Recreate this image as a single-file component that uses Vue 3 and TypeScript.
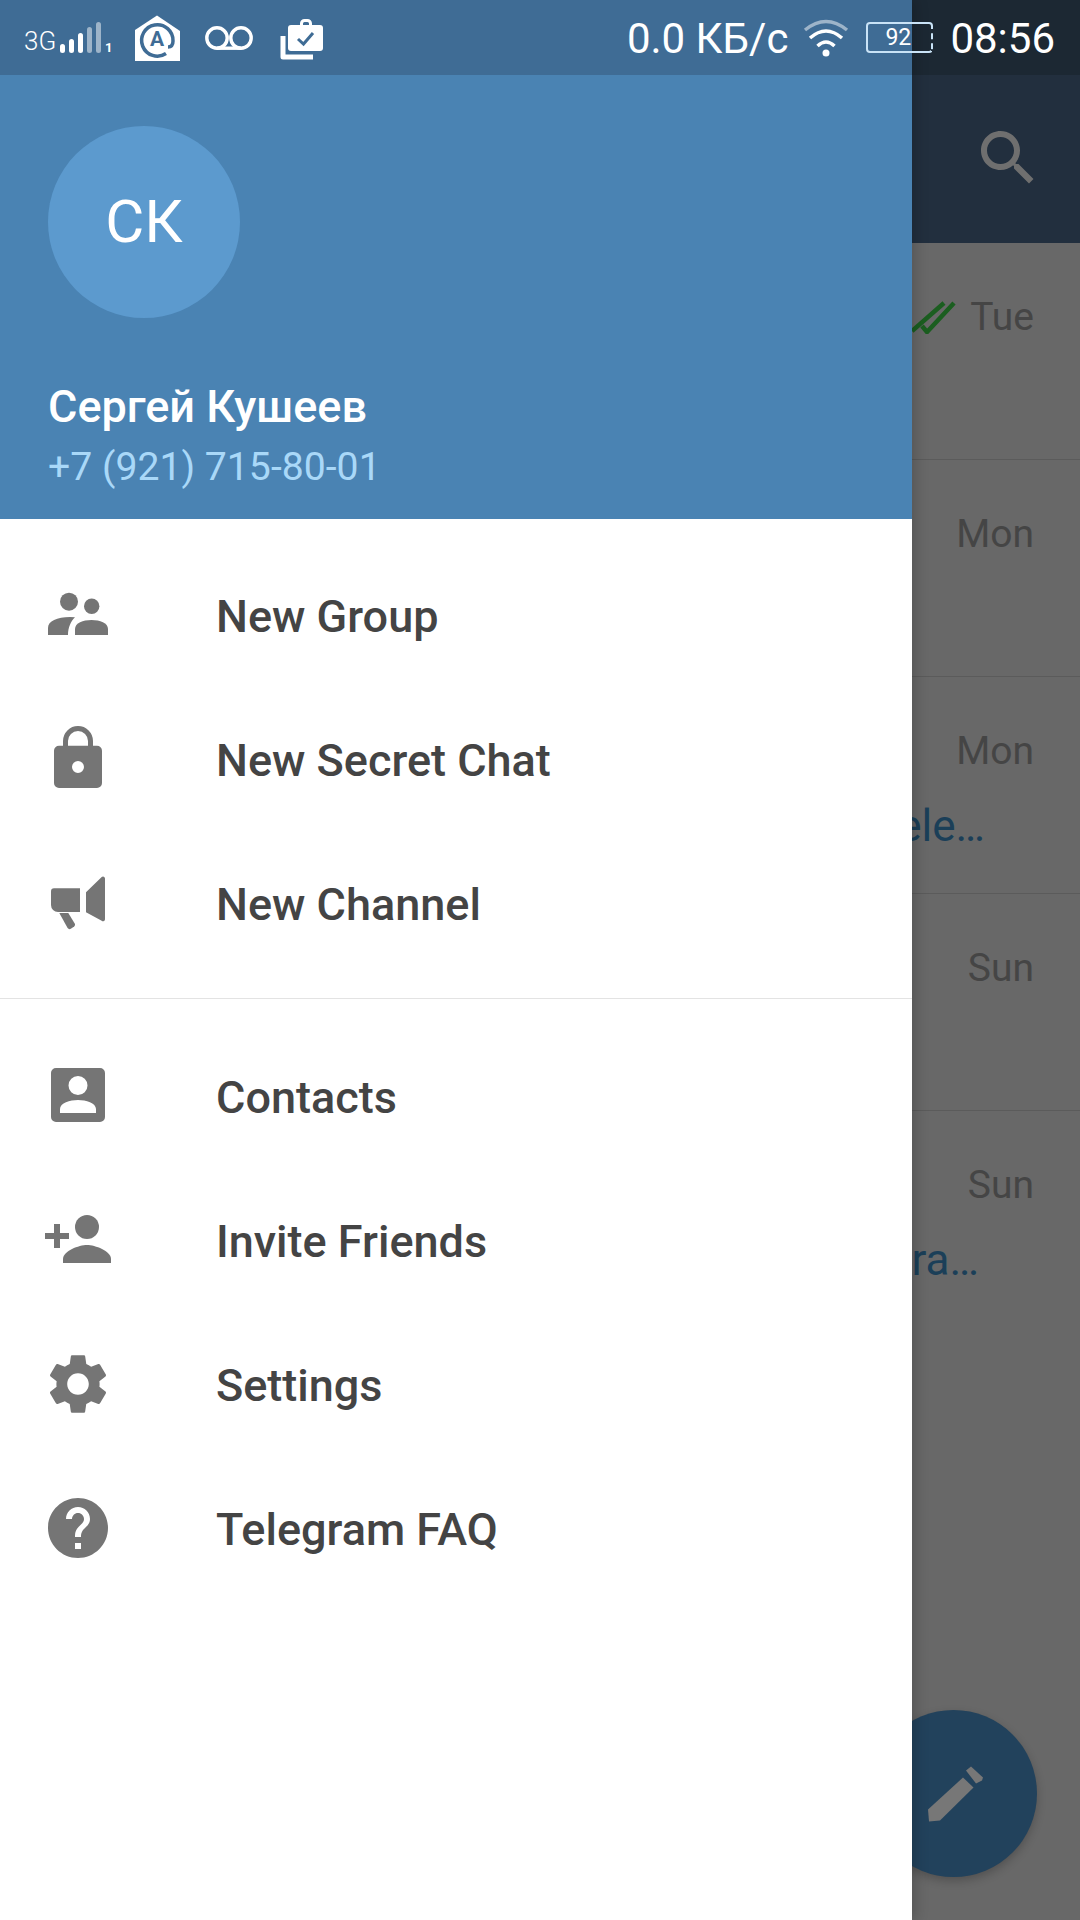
<script setup lang="ts">
interface Chat { day: string; tail?: string; tailClass?: string; read?: boolean }
const chats: Chat[] = [
  { day: 'Tue', read: true },
  { day: 'Mon' },
  { day: 'Mon', tail: 'Tele…', tailClass: 'tail-a' },
  { day: 'Sun' },
  { day: 'Sun', tail: 'Tera…', tailClass: 'tail-b' },
]
const signalBars = [
  { h: 9, dim: false }, { h: 14, dim: false }, { h: 20, dim: false }, { h: 26, dim: true }, { h: 31, dim: true },
]
const topItems = ['New Group', 'New Secret Chat', 'New Channel']
</script>

<template>
  <div class="phone">
    <!-- Chat list underneath the drawer -->
    <div class="screen">
      <div class="under-status"></div>
      <div class="toolbar">
        <svg class="search" viewBox="0 0 24 24"><path d="M15.5 14h-.79l-.28-.27C15.41 12.59 16 11.11 16 9.5 16 5.91 13.09 3 9.5 3S3 5.91 3 9.5 5.91 16 9.5 16c1.61 0 3.09-.59 4.23-1.57l.27.28v.79l5 4.99L20.49 19l-4.99-5zm-6 0C7.01 14 5 11.99 5 9.5S7.01 5 9.5 5 14 7.01 14 9.5 11.99 14 9.5 14z"/></svg>
      </div>
      <div class="chats">
        <div v-for="(c, i) in chats" :key="i" class="chat">
          <div class="chat-top">
            <svg v-if="c.read" class="ticks" viewBox="0 0 46 34"><path d="M1 31 33 3M11 26l5 6L43 3" /></svg>
            <span class="day">{{ c.day }}</span>
          </div>
          <div v-if="c.tail" class="tail" :class="c.tailClass">{{ c.tail }}</div>
        </div>
      </div>
      <div class="fab">
        <svg viewBox="918 1758.5 70 70"><path d="M927 1809 962 1777 972.500 1787 939 1820 928 1821Z"/><path d="M965 1770 970 1766 982 1777 981 1780 975 1783Z"/></svg>
      </div>
    </div>

    <!-- Drawer -->
    <aside class="drawer">
      <div class="drawer-status"></div>
      <header class="profile">
        <div class="avatar"><span>СК</span></div>
        <div class="name">Сергей Кушеев</div>
        <div class="phone-no">+7 (921) 715-80-01</div>
      </header>
      <nav class="menu">
        <section class="section first">
          <div class="row">
            <svg class="ico" viewBox="0 0 72 72"><circle cx="27" cy="22.700" r="9"/><circle cx="49.700" cy="27.300" r="7.700"/><path d="M6 56v-7c0-7 9-11 22-11l5 .3c-4 4-7 10-7 17.700z"/><path d="M33 56v-6c0-6 8-9 16.500-9S66 44 66 50v6z"/></svg>
            <span>{{ topItems[0] }}</span>
          </div>
          <div class="row">
            <svg class="ico" viewBox="0 0 72 72"><path d="M23.500 24v-6a12.500 12.500 0 0 1 25 0v6" fill="none" stroke="#757575" stroke-width="5"/><path fill-rule="evenodd" d="M17 22.700h38a5 5 0 0 1 5 5V60a5 5 0 0 1-5 5H17a5 5 0 0 1-5-5V27.700a5 5 0 0 1 5-5zM36 38a6 6 0 1 0 0 12 6 6 0 0 0 0-12z"/></svg>
            <span>{{ topItems[1] }}</span>
          </div>
          <div class="row">
            <svg class="ico" viewBox="0 0 72 72"><path d="M12 21.300h26V45H16a7 7 0 0 1-7-7V24.300a3 3 0 0 1 3-3z"/><path d="M17.300 46h9l6.700 11a2.500 2.500 0 0 1-.8 2.500l-3.400 2.300a2.500 2.500 0 0 1-3.200-.8z"/><path d="M44 25.300 59.700 10a2 2 0 0 1 3.300 1.500V52a2 2 0 0 1-3.300 1.800L44 45.300z"/></svg>
            <span>{{ topItems[2] }}</span>
          </div>
        </section>
        <section class="section second">
          <div class="row">
            <svg class="ico" viewBox="0 0 72 72"><path fill-rule="evenodd" d="M14 8h44a5 5 0 0 1 5 5v44a5 5 0 0 1-5 5H14a5 5 0 0 1-5-5V13a5 5 0 0 1 5-5zM36 16a9.500 9.500 0 1 0 0 19 9.500 9.500 0 0 0 0-19zM18 53h36v-4c0-6-10-9-18-9s-18 3-18 9z"/></svg>
            <span>Contacts</span>
          </div>
          <div class="row">
            <svg class="ico" viewBox="0 0 72 72"><circle cx="45" cy="23" r="12"/><path d="M21 59v-4c0-8 16-14 24-14s24 6 24 14v4z"/><path d="M3 29h9v-9h6v9h9v6h-9v9h-6v-9H3z"/></svg>
            <span>Invite Friends</span>
          </div>
          <div class="row">
            <svg class="ico" viewBox="0 0 24 24"><path d="M19.140 12.940c.04-.3.06-.61.06-.94 0-.32-.02-.64-.07-.94l2.030-1.580c.18-.14.23-.41.12-.61l-1.920-3.320c-.12-.22-.37-.29-.59-.22l-2.390.96c-.5-.38-1.030-.7-1.620-.94l-.36-2.540c-.04-.24-.24-.41-.48-.41h-3.840c-.24 0-.43.17-.47.41l-.36 2.540c-.59.24-1.130.57-1.620.94l-2.390-.96c-.22-.08-.47 0-.59.22L2.740 8.870c-.12.21-.08.47.12.61l2.030 1.580c-.05.3-.09.63-.09.94s.02.64.07.94l-2.030 1.580c-.18.14-.23.41-.12.61l1.920 3.320c.12.22.37.29.59.22l2.390-.96c.5.38 1.030.7 1.620.94l.36 2.540c.05.24.24.41.48.41h3.840c.24 0 .44-.17.47-.41l.36-2.540c.59-.24 1.130-.56 1.620-.94l2.390.96c.22.08.47 0 .59-.22l1.920-3.320c.12-.22.07-.47-.12-.61l-2.010-1.580zM12 15.600c-1.980 0-3.600-1.620-3.600-3.600s1.620-3.600 3.600-3.600 3.600 1.620 3.600 3.600-1.620 3.600-3.600 3.600z"/></svg>
            <span>Settings</span>
          </div>
          <div class="row">
            <svg class="ico" viewBox="0 0 24 24"><path d="M12 2C6.480 2 2 6.480 2 12s4.480 10 10 10 10-4.480 10-10S17.520 2 12 2zm1 17h-2v-2h2v2zm2.070-7.750l-.9.92C13.450 12.900 13 13.500 13 15h-2v-.5c0-1.100.45-2.100 1.170-2.830l1.240-1.260c.37-.36.59-.86.59-1.410 0-1.100-.9-2-2-2s-2 .9-2 2H8c0-2.210 1.790-4 4-4s4 1.790 4 4c0 .88-.36 1.680-.93 2.250z"/></svg>
            <span>Telegram FAQ</span>
          </div>
        </section>
      </nav>
    </aside>

    <!-- System status bar, drawn over everything -->
    <div class="status">
      <div class="status-left">
        <span class="net">3G</span>
        <div class="bars">
          <i v-for="(b, i) in signalBars" :key="i" :class="{ dim: b.dim }" :style="{ height: b.h + 'px' }"></i>
          <em>1</em>
        </div>
        <svg class="st-a" viewBox="135 14 45 46">
          <path d="M135 29 157 14.500 180 30v30h-45z" fill="#fff"/>
          <path d="M166 52.500A15.700 15.700 0 1 1 173 40c0 4-2 6-5 6" fill="none" stroke="#3f6c95" stroke-width="3.500"/>
          <text x="157" y="45" text-anchor="middle" class="st-a-letter">A</text>
        </svg>
        <svg class="st-vm" viewBox="0 0 48 24">
          <circle cx="12" cy="12" r="10.200"/>
          <circle cx="36" cy="12" r="10.200"/>
          <path d="M12 22.200h24"/>
        </svg>
        <svg class="st-task" viewBox="280 19 44 41">
          <path d="M283 36v21h30" fill="none" stroke="#fff" stroke-width="5" stroke-linejoin="round"/>
          <path d="M301.500 26v-2.500a3 3 0 0 1 3-3h3a3 3 0 0 1 3 3V26" fill="none" stroke="#fff" stroke-width="3"/>
          <rect x="288" y="25" width="35" height="26" rx="3" fill="#fff"/>
          <path d="M298 39l5.500 5 9.500-11" fill="none" stroke="#3f6c95" stroke-width="3"/>
        </svg>
      </div>
      <div class="status-right">
        <span class="speed">0.0 КБ/с</span>
        <svg class="wifi" viewBox="803 18 46 38">
          <path d="M805 29Q826 12 847 29" fill="none" stroke="#9db4c9" stroke-width="3.500"/>
          <path d="M810 37Q826 23 842 37" fill="none" stroke="#fff" stroke-width="3.500"/>
          <path d="M817.500 45Q826 37 834.500 45" fill="none" stroke="#fff" stroke-width="3.500"/>
          <circle cx="826" cy="52" r="3.500" fill="#fff"/>
        </svg>
        <div class="battery"><span>92</span></div>
        <span class="clock">08:56</span>
      </div>
    </div>
  </div>
</template>

<style>
html, body { margin: 0; padding: 0; background: #666; }
</style>

<style scoped>
.phone {
  position: relative;
  width: 1080px;
  height: 1920px;
  overflow: hidden;
  font-family: Roboto, "Noto Sans", sans-serif;
  background: #686868;
}
.screen { height: 100%; display: flex; flex-direction: column; }
.under-status { height: 75px; background: #1c2833; flex: none; }
.toolbar {
  height: 168px;
  flex: none;
  background: #222f3e;
  display: flex;
  justify-content: flex-end;
  align-items: center;
  padding-right: 36px;
  box-sizing: border-box;
}
.search { width: 72px; height: 72px; fill: #6f6f6f; margin-top: -2px; }
.chats { flex: 1; }
.chat {
  height: 217px;
  box-sizing: border-box;
  border-bottom: 1px solid #5b5b5b;
  padding: 0 46px 0 0;
  display: flex;
  flex-direction: column;
  align-items: flex-end;
}
.chat:last-child { border-bottom: none; }
.chat-top { display: flex; align-items: center; height: 46px; margin-top: 51px; }
.ticks { width: 46px; height: 34px; margin-right: 13px; fill: none; stroke: #1b5e20; stroke-width: 4.500; }
.day { font-size: 39px; line-height: 46px; color: #454545; }
.tail { font-size: 44px; line-height: 50px; margin-top: 27px; color: #1b3f58; }
.tail-a { margin-right: 49px; }
.tail-b { margin-right: 55px; }
.fab {
  position: absolute;
  left: 870px;
  top: 1710px;
  width: 167px;
  height: 167px;
  border-radius: 50%;
  background: #22425c;
  box-shadow: 0 4px 10px rgba(0,0,0,.22);
  display: flex;
  align-items: center;
  justify-content: center;
}
.fab svg { width: 70px; height: 70px; fill: #777; }

.drawer {
  position: absolute;
  left: 0;
  top: 0;
  bottom: 0;
  width: 912px;
  background: #fff;
  box-shadow: 4px 0 12px rgba(0,0,0,.18);
  display: flex;
  flex-direction: column;
}
.drawer-status { height: 75px; flex: none; background: #3f6c95; }
.profile {
  height: 444px;
  flex: none;
  box-sizing: border-box;
  background: #4a83b3;
  padding: 51px 0 0 48px;
  color: #fff;
}
.avatar {
  width: 192px;
  height: 192px;
  border-radius: 50%;
  background: #5c9ace;
  display: flex;
  align-items: center;
  justify-content: center;
  font-size: 60px;
}
.avatar span { margin-top: -2px; }
.name { margin-top: 64px; font-size: 45px; line-height: 50px; font-weight: 500; }
.phone-no { margin-top: 10px; font-size: 39.2px; line-height: 50px; color: #a9d8f8; }
.menu { flex: 1; display: flex; flex-direction: column; }
.section.first { padding: 24px 0 23px; border-bottom: 1px solid #e3e3e3; }
.section.second { padding-top: 25px; }
.row {
  height: 144px;
  display: flex;
  align-items: center;
  padding-left: 42px;
  font-size: 45px;
  font-weight: 500;
  color: #444;
}
.row span { margin-top: 2px; }
.ico { width: 72px; height: 72px; flex: none; fill: #757575; margin-right: 102px; }

.status {
  position: absolute;
  left: 0;
  top: 0;
  right: 0;
  height: 75px;
  display: flex;
  justify-content: space-between;
  align-items: center;
  color: #fff;
  padding: 0 25px 0 26px;
  box-sizing: border-box;
}
.status-left, .status-right { display: flex; align-items: center; }
.net { font-size: 26px; font-weight: 300; width: 36px; line-height: 28px; margin: 6px 0 0 -2px; }
.bars { display: flex; align-items: flex-end; gap: 4px; height: 31px; width: 50px; position: relative; }
.bars i { width: 5px; background: #fff; border-radius: 2.5px; display: block; }
.bars i.dim { background: #9db4c9; }
.bars em { position: absolute; left: 45px; bottom: 0; font-size: 13px; line-height: 10px; font-style: normal; font-weight: 700; }
.st-a { width: 45px; height: 46px; margin-left: 25px; }
.st-a-letter { font: 700 21px Roboto, sans-serif; fill: #3f6c95; }
.st-vm { width: 48px; height: 24px; margin-left: 25px; fill: none; stroke: #fff; stroke-width: 3.400; overflow: visible; }
.st-task { width: 44px; height: 41px; margin-left: 27px; margin-top: 4px; }
.speed, .clock { font-size: 42px; line-height: 50px; margin-top: 3px; }
.speed { margin-right: 15px; }
.wifi { width: 46px; height: 38px; margin-right: 17px; }
.battery {
  width: 67px;
  height: 31px;
  box-sizing: border-box;
  border: 2px solid #c9e3f7;
  border-right: 2px dashed #c9e3f7;
  border-radius: 4px;
  font-size: 23px;
  line-height: 27px;
  padding-left: 17px;
  margin-right: 17px;
}
</style>
